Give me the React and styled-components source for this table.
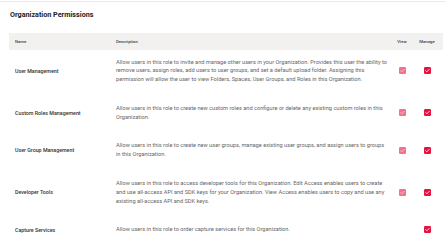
import styled, { createGlobalStyle } from "styled-components";

const GlobalStyle = createGlobalStyle`
  html, body {
    margin: 0;
    padding: 0;
    background: #ffffff;
    overflow: hidden;
  }
`;

const Page = styled.div`
  width: 446px;
  height: 251px;
  box-sizing: border-box;
  margin-top: 1px;
  border-top: 1px solid #f4e6ef;
  padding: 0 3px 0 9px;
  font-family: Roboto, "Liberation Sans", sans-serif;
`;

const Title = styled.h2`
  margin: 0;
  padding: 8px 0 0 1px;
  height: 31px;
  box-sizing: border-box;
  font-family: Roboto, "Liberation Sans", sans-serif;
  font-size: 7.2px;
  font-weight: 700;
  color: #222222;
`;

const Table = styled.div`
  display: grid;
  grid-template-columns: 101px 283px 18px 32px;
`;

const HeadCell = styled.div`
  background: #f2f1f0;
  height: 17px;
  display: flex;
  align-items: center;
  justify-content: ${(p) => (p.$center ? "center" : "flex-start")};
  padding-left: ${(p) => (p.$center ? "0" : "6px")};
  font-size: 4.3px;
  font-weight: 500;
  color: #444444;
`;

const Cell = styled.div`
  display: flex;
  align-items: center;
  justify-content: ${(p) => (p.$center ? "center" : "flex-start")};
  padding: ${(p) => (p.$first ? "7.5px" : "10px")} 0 10px ${(p) => (p.$center ? "0" : "6px")};
`;

const NameCell = styled(Cell)`
  font-size: 5.3px;
  font-weight: 500;
  color: #333333;
`;

const DescCell = styled(Cell)`
  padding-right: 4px;
  font-size: 5.65px;
  line-height: 8.8px;
  color: #666666;
`;

const Check = ({ muted }) => (
  <svg width="7" height="7" viewBox="0 0 7 7">
    <rect width="7" height="7" rx="1.2" fill={muted ? "#f2718c" : "#e6133f"} />
    <path
      d="M1.7 3.6 L2.9 4.8 L5.3 2.3"
      fill="none"
      stroke={muted ? "#fbd3dc" : "#ffffff"}
      strokeWidth="0.8"
      strokeLinecap="round"
      strokeLinejoin="round"
    />
  </svg>
);

const rows = [
  {
    name: "User Management",
    desc: "Allow users in this role to invite and manage other users in your Organization. Provides this user the ability to remove users, assign roles, add users to user groups, and set a default upload folder. Assigning this permission will allow the user to view Folders, Spaces, User Groups, and Roles in this Organization.",
    view: true,
  },
  {
    name: "Custom Roles Management",
    desc: "Allow users in this role to create new custom roles and configure or delete any existing custom roles in this Organization.",
    view: true,
  },
  {
    name: "User Group Management",
    desc: "Allow users in this role to create new user groups, manage existing user groups, and assign users to groups in this Organization.",
    view: true,
  },
  {
    name: "Developer Tools",
    desc: "Allow users in this role to access developer tools for this Organization. Edit Access enables users to create and use all-access API and SDK keys for your Organization. View Access enables users to copy and use any existing all-access API and SDK keys.",
    view: true,
  },
  {
    name: "Capture Services",
    desc: "Allow users in this role to order capture services for this Organization.",
    view: false,
  },
];

export default function App() {
  return (
    <>
      <GlobalStyle />
      <Page>
        <Title>Organization Permissions</Title>
        <Table>
          <HeadCell>Name</HeadCell>
          <HeadCell>Description</HeadCell>
          <HeadCell $center>View</HeadCell>
          <HeadCell $center>Manage</HeadCell>
          {rows.map((r, i) => (
            <>
              <NameCell key={r.name + "n"} $first={i === 0}>{r.name}</NameCell>
              <DescCell key={r.name + "d"} $first={i === 0}>{r.desc}</DescCell>
              <Cell key={r.name + "v"} $center $first={i === 0}>
                {r.view && <Check muted />}
              </Cell>
              <Cell key={r.name + "m"} $center $first={i === 0}>
                <Check />
              </Cell>
            </>
          ))}
        </Table>
      </Page>
    </>
  );
}
